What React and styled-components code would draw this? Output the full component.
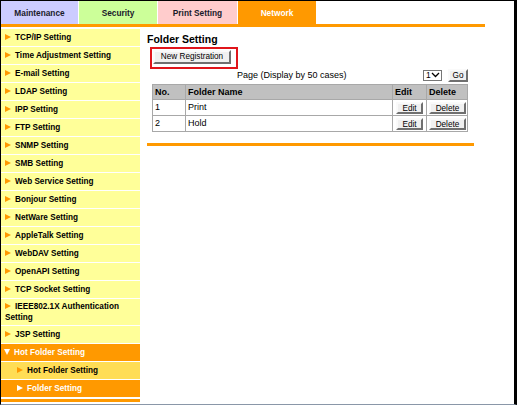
import React from "react";
import styled, { createGlobalStyle } from "styled-components";

const Global = createGlobalStyle`
  html, body {
    margin: 0;
    padding: 0;
    background: #fff;
  }
  * {
    box-sizing: border-box;
  }
`;

const Frame = styled.div`
  width: 517px;
  height: 405px;
  border-top: 1px solid #000;
  border-left: 1px solid #000;
  border-right: 3px solid #000;
  border-bottom: 1px solid #8a97a8;
  font-family: "Liberation Sans", Arial, sans-serif;
  font-size: 9px;
  color: #000;
  overflow: hidden;
`;

const Tabs = styled.div`
  display: flex;
  height: 23px;
`;

const Tab = styled.div`
  width: ${(p) => p.w}px;
  background: ${(p) => p.bg};
  color: ${(p) => (p.active ? "#fff" : "#1a1a2a")};
  font-size: 8.3px;
  font-weight: bold;
  display: flex;
  align-items: center;
  justify-content: center;
  border-left: ${(p) => (p.first ? "none" : "1px solid #fff")};
`;

const TabRule = styled.div`
  width: 484px;
  height: 3px;
  background: #ff9900;
`;

const Body = styled.div`
  display: flex;
  align-items: flex-start;
  margin-top: 2px;
`;

const Side = styled.nav`
  width: 139px;
  border-bottom: 3px solid #ff9900;
  padding-bottom: 1px;
`;

const Item = styled.div`
  background: ${(p) => (p.on ? "#ff9900" : p.sub ? "#ffdd55" : "#ffff99")};
  color: ${(p) => (p.on ? "#fff" : "#000")};
  font-size: 8.2px;
  font-weight: bold;
  line-height: 11px;
  padding: ${(p) => (p.tight ? "2px" : "3px")} 4px;
  padding-left: ${(p) => (p.sub ? "16px" : "4px")};
  border-bottom: 1px solid #fff;
`;

const Arrow = styled.span`
  display: inline-block;
  width: 0;
  height: 0;
  margin-right: 4px;
  vertical-align: 0;
  ${(p) =>
    p.down
      ? `border-top: 6px solid ${p.color};
         border-left: 3.5px solid transparent;
         border-right: 3.5px solid transparent;
         margin-left: -1px;`
      : `border-left: 6px solid ${p.color};
         border-top: 3.5px solid transparent;
         border-bottom: 3.5px solid transparent;`}
`;

const Main = styled.main`
  width: 327px;
  margin-left: 7px;
  padding-top: 2px;
`;

const Heading = styled.h1`
  margin: 0;
  font-size: 10.5px;
  line-height: 16px;
  font-weight: bold;
`;

const Highlight = styled.div`
  width: 88px;
  height: 22px;
  margin-left: 3px;
  border: 2px solid #e0151b;
  padding: 1px 0 0 1px;
`;

const Button = styled.button`
  display: block;
  font-family: "Liberation Sans", Arial, sans-serif;
  font-size: 8.2px;
  line-height: 10px;
  color: #000;
  background: #f0f0f0;
  border: 2px solid;
  border-color: #fafafa #6f6f6f #6f6f6f #fafafa;
  width: ${(p) => p.w}px;
  height: ${(p) => p.h}px;
  padding: 0;
  margin: ${(p) => (p.center ? "0 auto" : "0")};
  text-align: center;
  cursor: pointer;
`;

const PageRow = styled.div`
  display: flex;
  align-items: center;
  width: 316px;
  margin-left: 5px;
  height: 14px;
  margin-top: -1px;
`;

const PageText = styled.span`
  flex: 1;
  padding-left: 85px;
`;

const Select = styled.div`
  display: flex;
  align-items: center;
  justify-content: space-between;
  height: 11px;
  width: 19px;
  padding: 0 1px 0 2px;
  border: 1px solid #767676;
  background: #fff;
  font-size: 8.5px;
  margin-right: 6px;
`;

const Table = styled.table`
  margin-left: 5px;
  margin-top: 2px;
  width: 316px;
  table-layout: fixed;
  border-collapse: collapse;
  border: 1px solid #a8a8a8;
  font-size: 9px;
`;

const Th = styled.th`
  background: #c0c0c0;
  text-align: left;
  font-weight: bold;
  padding: 0 2px;
  height: 15px;
  line-height: 11px;
  border: 1px solid #a8a8a8;
  width: ${(p) => (p.w ? `${p.w}px` : "auto")};
`;

const Td = styled.td`
  padding: 0 2px;
  height: 16px;
  line-height: 11px;
  border: 1px solid #a8a8a8;
`;

const MainRule = styled.div`
  height: 3px;
  background: #ff9900;
  margin-top: 11px;
`;

const menu = [
  "TCP/IP Setting",
  "Time Adjustment Setting",
  "E-mail Setting",
  "LDAP Setting",
  "IPP Setting",
  "FTP Setting",
  "SNMP Setting",
  "SMB Setting",
  "Web Service Setting",
  "Bonjour Setting",
  "NetWare Setting",
  "AppleTalk Setting",
  "WebDAV Setting",
  "OpenAPI Setting",
  "TCP Socket Setting",
  "IEEE802.1X Authentication Setting",
  "JSP Setting",
];

const folders = [
  { no: 1, name: "Print" },
  { no: 2, name: "Hold" },
];

export default function App() {
  return (
    <Frame>
      <Global />
      <Tabs>
        <Tab first w={77} bg="#ccccff">Maintenance</Tab>
        <Tab w={79} bg="#ccff99">Security</Tab>
        <Tab w={80} bg="#ffcccc">Print Setting</Tab>
        <Tab w={79} bg="#ff9900" active>Network</Tab>
      </Tabs>
      <TabRule />
      <Body>
        <Side>
          {menu.map((m) => (
            <Item key={m} tight={m.length > 24}>
              <Arrow color="#ff9900" />
              {m}
            </Item>
          ))}
          <Item on>
            <Arrow down color="#fff" />
            Hot Folder Setting
          </Item>
          <Item sub>
            <Arrow color="#ff9900" />
            Hot Folder Setting
          </Item>
          <Item sub on>
            <Arrow color="#fff" />
            Folder Setting
          </Item>
        </Side>
        <Main>
          <Heading>Folder Setting</Heading>
          <Highlight>
            <Button w={78} h={14}>New Registration</Button>
          </Highlight>
          <PageRow>
            <PageText>Page (Display by 50 cases)</PageText>
            <Select>
              1
              <svg width="9" height="6" viewBox="0 0 9 6">
                <path d="M1 1 L4.5 4.5 L8 1" fill="none" stroke="#000" strokeWidth="1.3" />
              </svg>
            </Select>
            <Button w={20} h={13}>Go</Button>
          </PageRow>
          <Table>
            <thead>
              <tr>
                <Th w={33}>No.</Th>
                <Th>Folder Name</Th>
                <Th w={34}>Edit</Th>
                <Th w={41}>Delete</Th>
              </tr>
            </thead>
            <tbody>
              {folders.map((f) => (
                <tr key={f.no}>
                  <Td>{f.no}</Td>
                  <Td>{f.name}</Td>
                  <Td>
                    <Button center w={27} h={12}>Edit</Button>
                  </Td>
                  <Td>
                    <Button center w={37} h={12}>Delete</Button>
                  </Td>
                </tr>
              ))}
            </tbody>
          </Table>
          <MainRule />
        </Main>
      </Body>
    </Frame>
  );
}
